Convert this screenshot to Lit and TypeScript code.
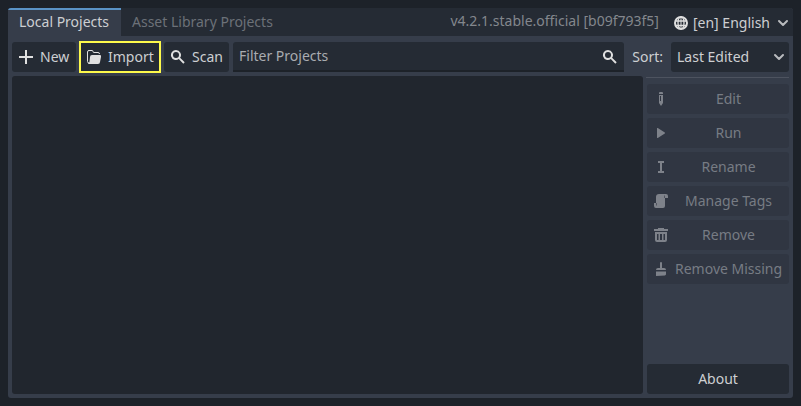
import { LitElement, html, css, svg } from "lit";
import { customElement } from "lit/decorators.js";

const icons: Record<string, unknown> = {
  add: svg`<path d="M7 1h2v6h6v2H9v6H7V9H1V7h6z"/>`,
  folder: svg`<path d="M3 1.5a1.5 1.5 0 0 0-1.5 1.5v9.5A1.5 1.5 0 0 0 3 14M2.5 1.5H6a1 1 0 0 1 1 1 1 1 0 0 0 1 1h4A1.5 1.5 0 0 1 13.5 5" fill="none" stroke="currentColor" stroke-width="1"/><path d="M6 6h8a1 1 0 0 1 1 1v1l-1 5a2 2 0 0 1-2 2H3a1.5 1.5 0 0 1-1-1 1.5 1.5 0 0 0 1.5-1.5L4 8a2 2 0 0 1 2-2z"/>`,
  search: svg`<path d="M6 1a5 5 0 1 0 2.8 9.1l4.5 4.6 1.4-1.4-4.6-4.5A5 5 0 0 0 6 1zm0 2a3 3 0 1 1 0 6 3 3 0 0 1 0-6z"/>`,
  globe: svg`<g fill="none" stroke="currentColor"><circle cx="8" cy="8" r="6" stroke-width="2"/><ellipse cx="8" cy="8" rx="3" ry="6" stroke-width="1.3"/><path d="M8 2v12" stroke-width="1"/><path d="M2 6h12M2 10.5h12" stroke-width="1.4"/></g>`,
  down: svg`<path d="M4 6l4 4 4-4" fill="none" stroke="currentColor" stroke-width="2" stroke-linecap="round" stroke-linejoin="round"/>`,
  edit: svg`<path d="M7 1a1 1 0 0 0-1 1v1h4V2a1 1 0 0 0-1-1zM6 4v8l2 3 2-3V4zm1 1h1v5H7z"/>`,
  play: svg`<path d="M4 12.5a.5.5 0 0 0 .8.4l7-4.5a.5.5 0 0 0 0-.8l-7-4.5a.5.5 0 0 0-.8.4z"/>`,
  rename: svg`<path d="M5 2v2h2v8H5v2h6v-2H9V4h2V2z"/>`,
  script: svg`<path d="M6 1a3 3 0 0 0-3 3v6H1v3a2 2 0 0 0 2 2h7a2 2 0 0 0 2-2V5h3V3a2 2 0 0 0-2-2z"/><path d="M3.5 10v2.5M11.5 2.5V5" fill="none" stroke="#303642" stroke-width=".6"/>`,
  remove: svg`<path d="M5 1v1H1v2h14V2h-4V1zM2 5v8a2 2 0 0 0 2 2h8a2 2 0 0 0 2-2V5zm2 2h1.5v6H4zm3 0h2v6H7zm3.5 0H12v6h-1.5z" fill-rule="evenodd"/>`,
  clear: svg`<path d="M8 1a1 1 0 0 0-1 1v5H5a2 2 0 0 0-2 2h10a2 2 0 0 0-2-2H9V2a1 1 0 0 0-1-1zM3 10.5V15l9-.5 1-1v-3z"/>`,
};

const icon = (name: string) => html`<svg class="icon ${name}" viewBox="0 0 16 16" fill="currentColor">${icons[name]}</svg>`;

const actions: [string, string][] = [
  ["edit", "Edit"],
  ["play", "Run"],
  ["rename", "Rename"],
  ["script", "Manage Tags"],
  ["remove", "Remove"],
  ["clear", "Remove Missing"],
];

@customElement("app-root")
export class AppRoot extends LitElement {
  static styles = css`
    :host {
      display: block;
      box-sizing: border-box;
      height: 406px;
      padding: 8px;
      background: #1d2229;
      color: #cdcfd2;
      font: 14px/20px "Noto Sans", sans-serif;
    }
    * { box-sizing: border-box; }
    .icon { width: 16px; height: 16px; flex: none; display: block; color: #e0e0e0; }
    .icon.down { color: #b9bbbe; }
    .window {
      height: 390px;
      display: flex;
      flex-direction: column;
      background: #363d4a;
      border-radius: 3px;
      overflow: hidden;
    }
    .tabs { display: flex; height: 28px; flex: none; background: #252b34; white-space: nowrap; }
    .tab { padding: 4px 11px 0; color: #6c7178; }
    .tab.active { width: 113px; padding-top: 2px; border-top: 2px solid #5a93c6; background: #363d4a; color: #cdcfd2; }
    .version { margin-left: auto; padding-top: 3px; color: #83878d; }
    .lang { display: flex; align-items: center; padding: 2px 2px 0 14px; }
    .lang .label { margin: 0 0 0 4px; }
    .lang .icon:last-child { margin-left: 5px; }
    .toolbar { display: flex; height: 30px; flex: none; margin: 6px 4px 4px; white-space: nowrap; }
    .button {
      display: flex;
      align-items: center;
      gap: 6px;
      height: 30px;
      padding: 0 6px;
      border: 0;
      border-radius: 3px;
      background: #252b34;
      color: inherit;
      font: inherit;
    }
    .new { width: 64px; }
    .import { width: 82px; height: 32px; margin: -1px 3px 0; padding: 0 5px; border: 2px solid #fdf94b; border-radius: 0; }
    .scan { width: 65px; }
    .filter {
      display: flex;
      flex: 1;
      margin-left: 4px;
      padding: 4px 6px;
      background: #252b34;
      border-bottom: 2px solid #1d2229;
      border-radius: 3px 3px 0 0;
      color: #a9acb0;
    }
    .filter .icon { margin: 3px 0 0 auto; }
    .sort { margin: 5px 8px 0; }
    .select { width: 118px; justify-content: space-between; padding: 0 2px 0 6px; }
    .body { display: flex; flex: 1; gap: 4px; margin: 0 4px 4px; min-height: 0; }
    .list { flex: 1; background: #21262e; border-radius: 3px; }
    .side { width: 142px; display: flex; flex-direction: column; gap: 4px; padding-top: 1px; }
    .rule { height: 1px; margin: 0 0 2px -1px; background: #4d535f; }
    .action { background: #303642; color: #777c84; }
    .action .icon { color: #7e828a; }
    .action .label { flex: 1; margin-right: 1px; text-align: center; white-space: nowrap; }
    .about { margin-top: auto; justify-content: center; }
  `;

  render() {
    return html`
      <div class="window">
        <div class="tabs">
          <div class="tab active">Local Projects</div>
          <div class="tab">Asset Library Projects</div>
          <div class="version">v4.2.1.stable.official [b09f793f5]</div>
          <div class="lang">${icon("globe")}<span class="label">[en] English</span>${icon("down")}</div>
        </div>
        <div class="toolbar">
          <button class="button new">${icon("add")}<span>New</span></button>
          <button class="button import">${icon("folder")}<span>Import</span></button>
          <button class="button scan">${icon("search")}<span>Scan</span></button>
          <div class="filter"><span>Filter Projects</span>${icon("search")}</div>
          <div class="sort">Sort:</div>
          <button class="button select"><span>Last Edited</span>${icon("down")}</button>
        </div>
        <div class="body">
          <div class="list"></div>
          <div class="side">
            <div class="rule"></div>
            ${actions.map(([name, label]) => html`
              <button class="button action">${icon(name)}<span class="label">${label}</span></button>`)}
            <button class="button about">About</button>
          </div>
        </div>
      </div>
    `;
  }
}
